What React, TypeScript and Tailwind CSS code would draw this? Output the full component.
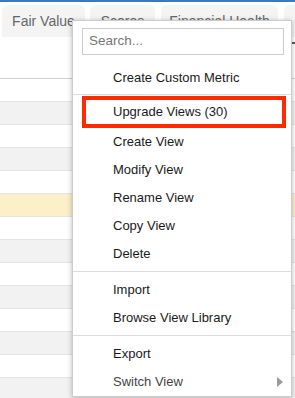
import React from "react";

const rows = Array.from({ length: 14 }, (_, i) => i);

function MenuItem({ label, muted }: { label: string; muted?: boolean }) {
  return (
    <div
      className={`flex h-[28px] items-center pl-[40px] text-[13px] ${
        muted ? "text-[#444]" : "text-[#1a1a1a]"
      }`}
    >
      {label}
    </div>
  );
}

function Sep() {
  return <div className="mt-[3px] mb-[4px] h-px bg-[#dcdcdc]" />;
}

export default function App() {
  return (
    <div className="relative h-[398px] w-[295px] overflow-hidden bg-white font-['Liberation_Sans',Arial,sans-serif]">
      <div className="h-[2px] bg-[#3a78c3]" />
      <div className="flex h-[35px] items-end pl-[2px]">
        <div className="flex h-[32px] w-[83px] shrink-0 items-center justify-center rounded-t-[6px] bg-[#f4f4f4] text-[14px] text-[#666]">
          Fair Value
        </div>
        <div className="ml-[5px] flex h-[32px] w-[65px] shrink-0 items-center justify-center rounded-t-[6px] bg-[#f4f4f4] text-[14px] text-[#666]">
          Scores
        </div>
        <div className="ml-[6px] flex h-[32px] w-[117px] shrink-0 items-center justify-center rounded-t-[6px] bg-[#f4f4f4] text-[14px] text-[#666]">
          Financial Health
        </div>
        <div className="ml-[6px] h-[32px] w-[40px] shrink-0 rounded-t-[6px] bg-[#f4f4f4]" />
      </div>
      <div className="flex h-[42px] items-start justify-end border-b border-[#cfcfcf] pt-[5px]">
        <div className="h-[1.5px] w-[5px] bg-[#555]" />
      </div>
      <div>
        {rows.map((i) => (
          <div
            key={i}
            className={`h-[23px] border-b border-[#e4e4e4] ${
              i === 5 ? "bg-[#fcf0c8]" : i % 2 === 1 ? "bg-[#f2f2f2]" : "bg-white"
            }`}
          />
        ))}
      </div>

      <div className="absolute left-[72px] top-[20px] w-[220px] border border-[#cccccc] bg-white pt-[7px] shadow-[0_1px_5px_rgba(0,0,0,0.28)]">
        <div className="ml-[9px] flex h-[27px] w-[202px] items-center border border-[#cccccc] pl-[6px] text-[13.5px] text-[#777]">
          Search...
        </div>
        <div className="mt-[9px]">
          <MenuItem label="Create Custom Metric" />
        </div>
        <div className="mt-[2px] mb-px h-px bg-[#dcdcdc]" />
        <div className="ml-[9px] flex h-[32px] w-[204px] items-center border-[4px] border-[#ff2a00] pl-[27px] text-[13px] text-[#1a1a1a]">
          Upgrade Views (30)
        </div>
        <MenuItem label="Create View" />
        <MenuItem label="Modify View" />
        <MenuItem label="Rename View" />
        <MenuItem label="Copy View" />
        <MenuItem label="Delete" />
        <Sep />
        <MenuItem label="Import" />
        <MenuItem label="Browse View Library" />
        <Sep />
        <MenuItem label="Export" />
        <div className="flex h-[28px] items-center justify-between pl-[40px] pr-[8px] text-[13px] text-[#444]">
          <span>Switch View</span>
          <svg width="6" height="10" viewBox="0 0 6 10">
            <path d="M0 0 L6 5 L0 10 Z" fill="#999" />
          </svg>
        </div>
      </div>
    </div>
  );
}
